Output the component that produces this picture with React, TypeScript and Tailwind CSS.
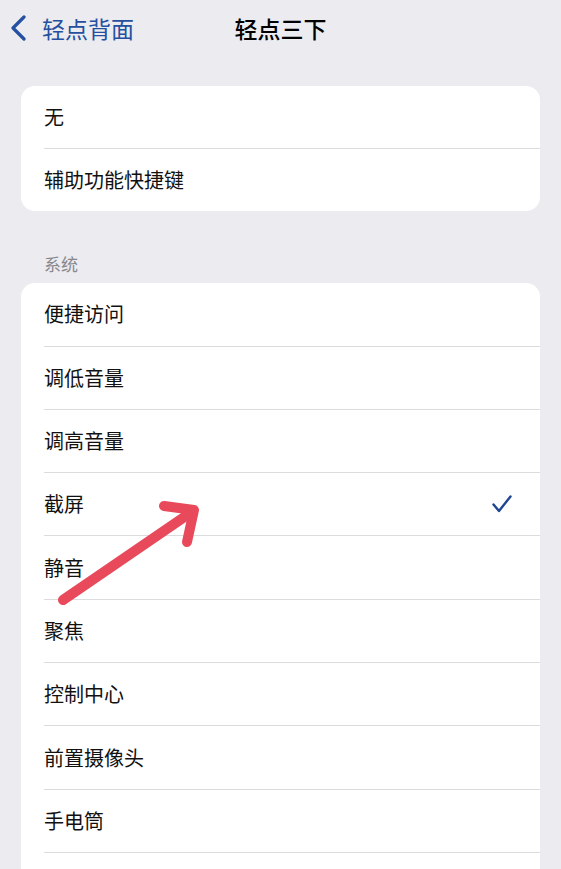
import React from 'react';

const font = { fontFamily: '"Noto Sans CJK SC", "Noto Sans", sans-serif' };

const topItems = ['无', '辅助功能快捷键'];
const systemItems = ['便捷访问', '调低音量', '调高音量', '截屏', '静音', '聚焦', '控制中心', '前置摄像头', '手电筒', '锁定屏幕'];

const Row: React.FC<{ label: string; last?: boolean; checked?: boolean }> = ({ label, last, checked }) => (
  <div className="pl-[23px]">
    <div className={`flex items-center justify-between pr-[28px] ${last ? 'h-[62px]' : 'h-[63.3px] border-b border-[#dcdcdf]'}`}>
      <span className="text-[20px] leading-none text-[#111]">{label}</span>
      {checked && (
        <svg width="20" height="18" viewBox="0 0 20 18" fill="none">
          <path d="M1.5 9.5 L7 16 L18.5 1.5" stroke="#1f4691" strokeWidth="2.4" strokeLinecap="round" strokeLinejoin="round" />
        </svg>
      )}
    </div>
  </div>
);

export default function App() {
  return (
    <div className="relative min-h-screen h-[869px] overflow-hidden bg-[#ebebf0]" style={font}>
      {/* Nav bar */}
      <header className="grid grid-cols-[1fr_auto_1fr] items-center h-[56px]">
        <div className="flex items-center pl-[10px] gap-[15px] text-[#25509f]">
          <svg width="17" height="26" viewBox="0 0 17 26" fill="none">
            <path d="M14 2 L3 13 L14 24" stroke="#25509f" strokeWidth="3.2" strokeLinecap="round" strokeLinejoin="round" />
          </svg>
          <span className="text-[23px] leading-none">轻点背面</span>
        </div>
        <h1 className="text-[23px] leading-none font-medium text-black">轻点三下</h1>
        <div />
      </header>

      <main className="pt-[30px] px-[21px]">
        <section className="bg-white rounded-[14px] overflow-hidden">
          {topItems.map((item, i) => (
            <Row key={item} label={item} last={i === topItems.length - 1} />
          ))}
        </section>

        <div className="pt-[41px] pb-[7px] pl-[23px] text-[17px] leading-[24px] text-[#86868b]">系统</div>

        <section className="bg-white rounded-[14px] overflow-hidden">
          {systemItems.map((item, i) => (
            <Row key={item} label={item} last={i === systemItems.length - 1} checked={item === '截屏'} />
          ))}
        </section>
      </main>

      {/* Red annotation arrow */}
      <svg className="absolute left-0 top-0 pointer-events-none" width="561" height="869" viewBox="0 0 561 869" fill="none">
        <path d="M63 600 L193 511" stroke="#e84a5b" strokeWidth="10" strokeLinecap="round" />
        <path d="M164 506 L194 510 L187 542" stroke="#e84a5b" strokeWidth="10" strokeLinecap="round" strokeLinejoin="round" />
      </svg>
    </div>
  );
}
